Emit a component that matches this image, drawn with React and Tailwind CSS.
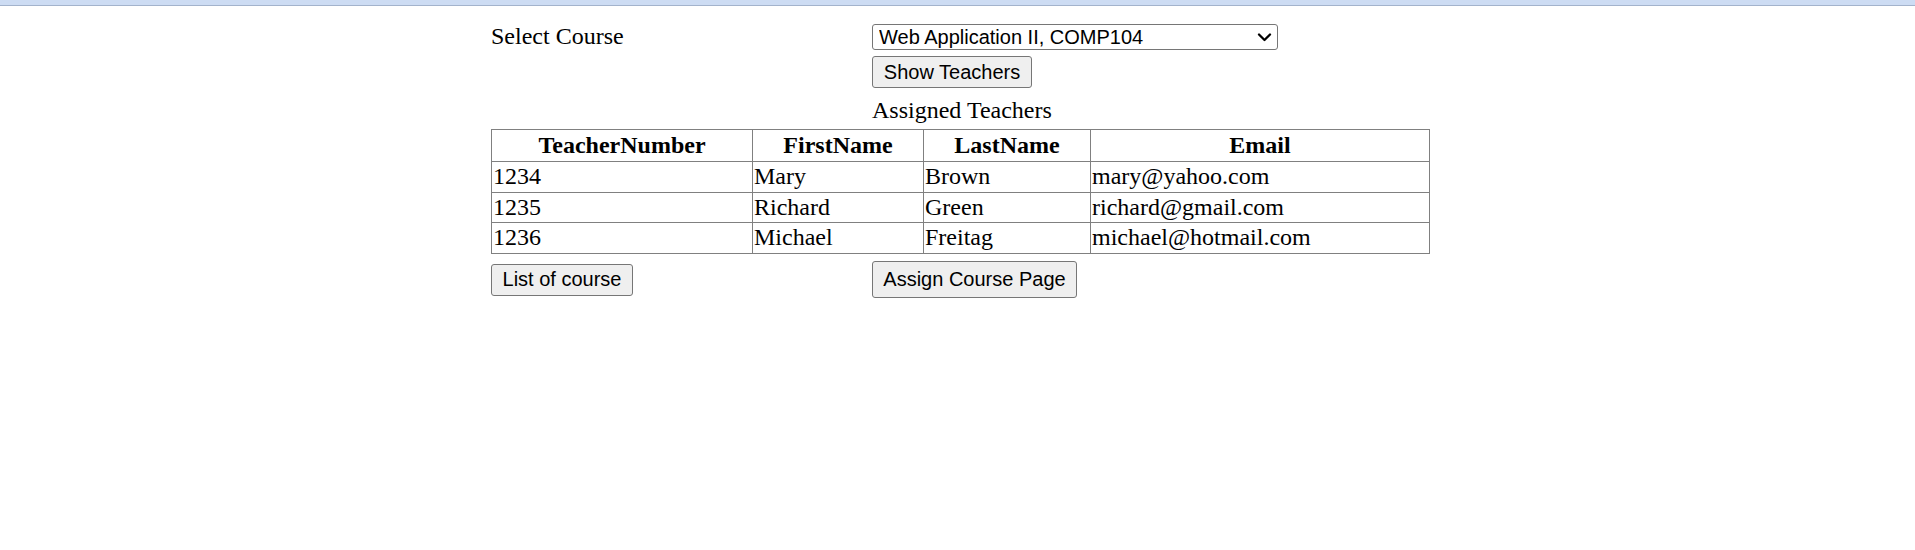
// Course → assigned teachers view, drawn at the reference's 150% browser zoom.

import { useState } from 'react'

const COURSES = ['Web Application II, COMP104']

const TEACHERS = [
  { number: '1234', first: 'Mary', last: 'Brown', email: 'mary@yahoo.com' },
  { number: '1235', first: 'Richard', last: 'Green', email: 'richard@gmail.com' },
  { number: '1236', first: 'Michael', last: 'Freitag', email: 'michael@hotmail.com' },
]

const btn =
  "block rounded-[3px] border border-[#767676] bg-[#efefef] font-['Liberation_Sans',Arial,sans-serif] text-[20px] leading-[23px] text-black"

export default function App() {
  const [course, setCourse] = useState(COURSES[0])

  return (
    <div className="min-h-[550px] bg-white font-['Liberation_Serif','Times_New_Roman',serif] text-[24px] leading-[28px] text-black">
      <div className="h-[6px] border-b border-[#a3b3cc] bg-[#cddcf3]" />

      <div className="flex justify-center pl-[5px] pt-[16px]">
        <div className="w-[938px]">
          <div className="grid grid-cols-[381px_1fr] items-start">
            <span>Select Course</span>
            <div className="relative mt-[2px] w-[406px]">
              <select
                value={course}
                onChange={(e) => setCourse(e.target.value)}
                className="block h-[26px] w-full appearance-none rounded-[3px] border border-[#767676] bg-white pl-[6px] font-['Liberation_Sans',Arial,sans-serif] text-[20px] leading-[23px] text-black outline-none"
              >
                {COURSES.map((c) => (
                  <option key={c}>{c}</option>
                ))}
              </select>
              <svg
                className="pointer-events-none absolute right-[6px] top-[9px] h-[9px] w-[15px]"
                viewBox="0 0 15 9"
                fill="none"
                stroke="black"
                strokeWidth="2.3"
                strokeLinecap="round"
                strokeLinejoin="round"
              >
                <path d="M2 1.5l5.5 5.5L13 1.5" />
              </svg>
            </div>
          </div>

          <div className="mt-[6px] grid grid-cols-[381px_1fr]">
            <span />
            <button className={`${btn} h-[32px] w-[160px]`}>Show Teachers</button>
          </div>

          <div className="mt-[8px] grid grid-cols-[381px_1fr]">
            <span />
            <span>Assigned Teachers</span>
          </div>

          <table className="mt-[5px] w-[938px] table-fixed border-collapse">
            <colgroup>
              <col className="w-[261px]" />
              <col className="w-[171px]" />
              <col className="w-[167px]" />
              <col className="w-[339px]" />
            </colgroup>
            <thead>
              <tr>
                {['TeacherNumber', 'FirstName', 'LastName', 'Email'].map((h) => (
                  <th
                    key={h}
                    className="border border-[#808080] px-[1px] py-[1px] text-center font-bold leading-[29px]"
                  >
                    {h}
                  </th>
                ))}
              </tr>
            </thead>
            <tbody>
              {TEACHERS.map((t) => (
                <tr key={t.number}>
                  {[t.number, t.first, t.last, t.email].map((v, i) => (
                    <td
                      key={i}
                      className="border border-[#808080] px-[1px] py-[1px] text-left leading-[27.7px]"
                    >
                      {v}
                    </td>
                  ))}
                </tr>
              ))}
            </tbody>
          </table>

          <div className="mt-[7px] grid grid-cols-[381px_1fr] items-center">
            <div>
              <button className={`${btn} h-[32px] w-[142px]`}>List of course</button>
            </div>
            <div>
              <button className={`${btn} h-[37px] w-[205px]`}>Assign Course Page</button>
            </div>
          </div>
        </div>
      </div>
    </div>
  )
}
